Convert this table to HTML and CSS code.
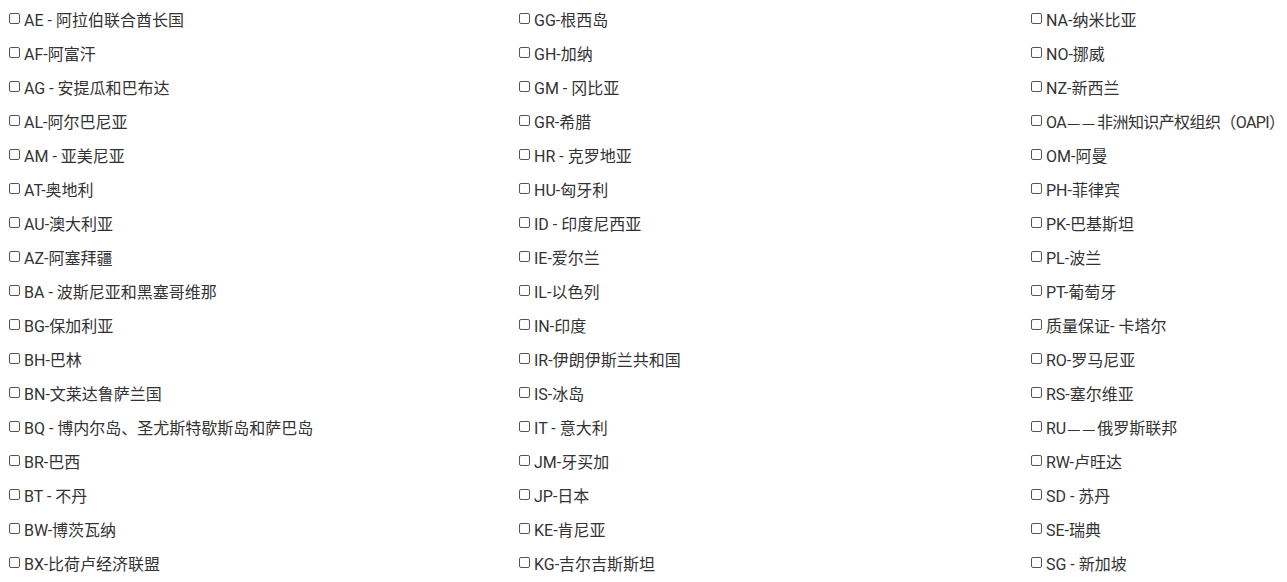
FILE: index.html
```html
<!DOCTYPE html>
<html lang="zh">
<head>
<meta charset="utf-8">
<link rel="stylesheet" href="styles.css">
</head>
<body>
<div class="grid">
  <div class="col c1">
    <label class="item"><input type="checkbox"><span>AE - 阿拉伯联合酋长国</span></label>
    <label class="item"><input type="checkbox"><span>AF-阿富汗</span></label>
    <label class="item"><input type="checkbox"><span>AG - 安提瓜和巴布达</span></label>
    <label class="item"><input type="checkbox"><span>AL-阿尔巴尼亚</span></label>
    <label class="item"><input type="checkbox"><span>AM - 亚美尼亚</span></label>
    <label class="item"><input type="checkbox"><span>AT-奥地利</span></label>
    <label class="item"><input type="checkbox"><span>AU-澳大利亚</span></label>
    <label class="item"><input type="checkbox"><span>AZ-阿塞拜疆</span></label>
    <label class="item"><input type="checkbox"><span>BA - 波斯尼亚和黑塞哥维那</span></label>
    <label class="item"><input type="checkbox"><span>BG-保加利亚</span></label>
    <label class="item"><input type="checkbox"><span>BH-巴林</span></label>
    <label class="item"><input type="checkbox"><span>BN-文莱达鲁萨兰国</span></label>
    <label class="item"><input type="checkbox"><span>BQ - 博内尔岛、圣尤斯特歇斯岛和萨巴岛</span></label>
    <label class="item"><input type="checkbox"><span>BR-巴西</span></label>
    <label class="item"><input type="checkbox"><span>BT - 不丹</span></label>
    <label class="item"><input type="checkbox"><span>BW-博茨瓦纳</span></label>
    <label class="item"><input type="checkbox"><span>BX-比荷卢经济联盟</span></label>
  </div>
  <div class="col c2">
    <label class="item"><input type="checkbox"><span>GG-根西岛</span></label>
    <label class="item"><input type="checkbox"><span>GH-加纳</span></label>
    <label class="item"><input type="checkbox"><span>GM - 冈比亚</span></label>
    <label class="item"><input type="checkbox"><span>GR-希腊</span></label>
    <label class="item"><input type="checkbox"><span>HR - 克罗地亚</span></label>
    <label class="item"><input type="checkbox"><span>HU-匈牙利</span></label>
    <label class="item"><input type="checkbox"><span>ID - 印度尼西亚</span></label>
    <label class="item"><input type="checkbox"><span>IE-爱尔兰</span></label>
    <label class="item"><input type="checkbox"><span>IL-以色列</span></label>
    <label class="item"><input type="checkbox"><span>IN-印度</span></label>
    <label class="item"><input type="checkbox"><span>IR-伊朗伊斯兰共和国</span></label>
    <label class="item"><input type="checkbox"><span>IS-冰岛</span></label>
    <label class="item"><input type="checkbox"><span>IT - 意大利</span></label>
    <label class="item"><input type="checkbox"><span>JM-牙买加</span></label>
    <label class="item"><input type="checkbox"><span>JP-日本</span></label>
    <label class="item"><input type="checkbox"><span>KE-肯尼亚</span></label>
    <label class="item"><input type="checkbox"><span>KG-吉尔吉斯斯坦</span></label>
  </div>
  <div class="col c3">
    <label class="item"><input type="checkbox"><span>NA-纳米比亚</span></label>
    <label class="item"><input type="checkbox"><span>NO-挪威</span></label>
    <label class="item"><input type="checkbox"><span>NZ-新西兰</span></label>
    <label class="item"><input type="checkbox"><span class="tight">OA<span class="dash">——</span>非洲知识产权组织（OAPI）</span></label>
    <label class="item"><input type="checkbox"><span>OM-阿曼</span></label>
    <label class="item"><input type="checkbox"><span>PH-菲律宾</span></label>
    <label class="item"><input type="checkbox"><span>PK-巴基斯坦</span></label>
    <label class="item"><input type="checkbox"><span>PL-波兰</span></label>
    <label class="item"><input type="checkbox"><span>PT-葡萄牙</span></label>
    <label class="item"><input type="checkbox"><span>质量保证- 卡塔尔</span></label>
    <label class="item"><input type="checkbox"><span>RO-罗马尼亚</span></label>
    <label class="item"><input type="checkbox"><span>RS-塞尔维亚</span></label>
    <label class="item"><input type="checkbox"><span>RU<span class="dash">——</span>俄罗斯联邦</span></label>
    <label class="item"><input type="checkbox"><span>RW-卢旺达</span></label>
    <label class="item"><input type="checkbox"><span>SD - 苏丹</span></label>
    <label class="item"><input type="checkbox"><span>SE-瑞典</span></label>
    <label class="item"><input type="checkbox"><span>SG - 新加坡</span></label>
  </div>
</div>
</body>
</html>
```
FILE: styles.css
```css
html, body {
  margin: 0;
  padding: 0;
  background: #ffffff;
  overflow: hidden;
}
body {
  font-family: Roboto, "Noto Sans CJK SC", sans-serif;
  font-size: 16px;
  color: #333333;
}
.grid {
  display: grid;
  grid-template-columns: 510px 512px 1fr;
  padding: 2px 0 0 9px;
}
.col {
  display: flex;
  flex-direction: column;
  min-width: 0;
}
.item {
  display: flex;
  align-items: center;
  height: 34px;
  white-space: nowrap;
}
.item input {
  appearance: none;
  -webkit-appearance: none;
  width: 11px;
  height: 11px;
  margin: 0 4px 1px 0;
  border: 1px solid #555555;
  border-radius: 2px;
  background: #fff;
  flex: none;
}
.dash {
  font-family: "Noto Sans", Roboto, sans-serif;
  font-size: 13px;
  letter-spacing: 2px;
  margin-left: 1px;
}
.tight {
  letter-spacing: -0.6px;
}
```
